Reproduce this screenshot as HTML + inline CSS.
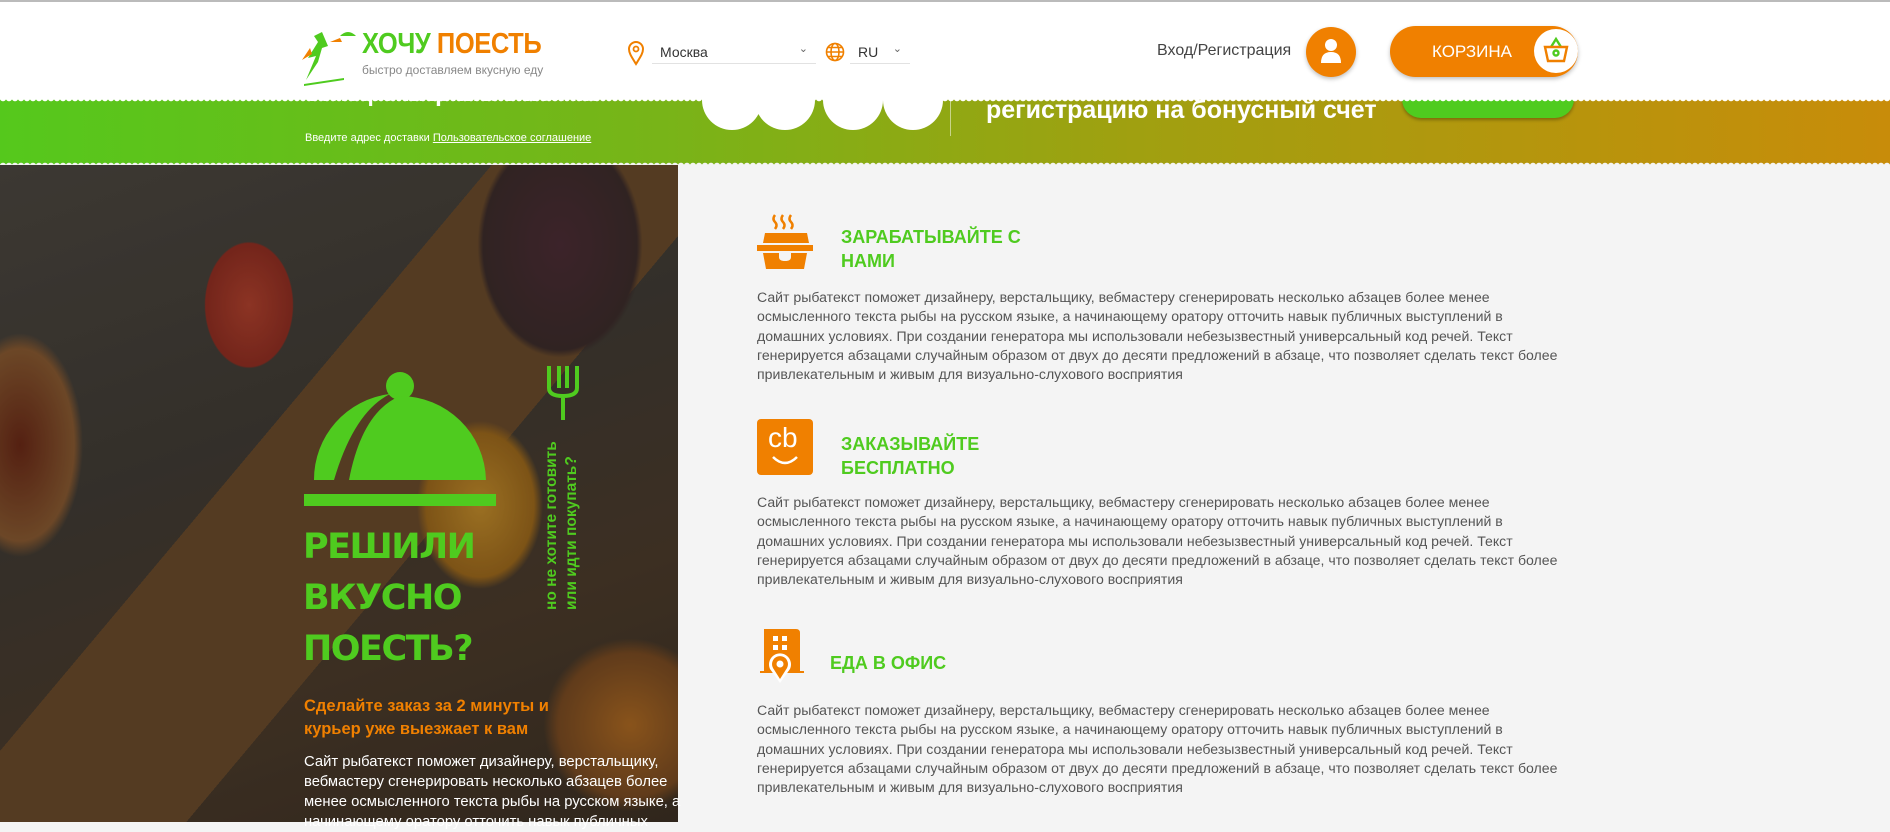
<!DOCTYPE html>
<html><head><meta charset="utf-8"><style>
*{margin:0;padding:0;box-sizing:border-box}
body{width:1890px;height:822px;overflow:hidden;background:#f4f4f4;font-family:"Liberation Sans","DejaVu Sans",sans-serif;position:relative}
.abs{position:absolute}
.band{left:0;top:88px;width:1890px;height:78px;background:linear-gradient(90deg,#55c81c 0%,#78b418 35%,#a0a010 60%,#c88c0a 100%)}
.header{left:0;top:0;width:1890px;height:98px;background:#fff;border-top:2px solid #bbb}
.wave{left:0;width:1890px;height:6px;background:radial-gradient(circle at 3px 0,#fff 3px,transparent 3.5px) 0 0/6px 6px repeat-x}
.photo{left:0;top:165px;width:678px;height:657px;background:
radial-gradient(ellipse 62px 88px at 249px 140px,#b4402c 0%,#932c20 70%,transparent 72%),
radial-gradient(ellipse 90px 120px at 480px 340px,#c8902a 0%,#a06a1a 60%,transparent 70%),
radial-gradient(ellipse 110px 150px at 560px 80px,#4a2a34 0%,#3a2a2a 70%,transparent 75%),
radial-gradient(ellipse 90px 160px at 20px 280px,#6a2614 0%,#8a5a30 60%,transparent 70%),
radial-gradient(ellipse 120px 120px at 630px 560px,#b06a20 0%,#7a4a20 60%,transparent 72%),
linear-gradient(130deg,transparent 0 40%,#6a4a2a 40% 60%,transparent 60%),
linear-gradient(160deg,#4a4640 0%,#3e3a34 40%,#4a3a2a 70%,#3a2e22 100%)}
.photo:after{content:"";position:absolute;inset:0;background:rgba(20,15,10,.25)}
.g{color:#4fcb1f}.o{color:#f08000}
.par{left:757px;width:820px;font-size:14.1px;line-height:19.3px;color:#555}
.tt{font-weight:bold;font-size:18px;line-height:24px;color:#4fcb1f}
</style></head><body>
<div class="abs band"></div>
<div class="abs wave" style="background:radial-gradient(circle at 3px 6px,#f4f4f4 3px,transparent 3.5px) 0 0/6px 6px repeat-x;height:6px;top:160px"></div>
<div class="abs" style="left:986px;top:96px;color:#fff;font-weight:bold;font-size:25px">регистрацию на бонусный счет</div>
<div class="abs" style="left:305px;top:80px;color:#fff;font-weight:bold;font-size:24px">Телефон:Пригласи:заказ</div>
<div class="abs" style="left:702px;top:70px;width:60px;height:60px;border-radius:50%;background:#fff"></div>
<div class="abs" style="left:755px;top:70px;width:60px;height:60px;border-radius:50%;background:#fff"></div>
<div class="abs" style="left:823px;top:70px;width:60px;height:60px;border-radius:50%;background:#fff"></div>
<div class="abs" style="left:883px;top:70px;width:60px;height:60px;border-radius:50%;background:#fff"></div>
<div class="abs" style="left:950px;top:100px;width:1px;height:36px;background:rgba(255,255,255,.5)"></div>
<div class="abs" style="left:1402px;top:80px;width:172px;height:38px;border-radius:19px;background:#4fcb1f;box-shadow:0 2px 3px rgba(0,0,0,.3)"></div>
<div class="abs" style="left:305px;top:132px;color:#fff;font-size:11px">Введите адрес доставки <u>Пользовательское соглашение</u></div>
<div class="abs header"></div>
<div class="abs wave" style="top:98px"></div>
<svg class="abs" style="left:300px;top:28px" width="60" height="58" viewBox="0 0 60 58"><path d="M22 4 L14 8 L18 14 L8 30 L16 28 L6 52 L18 34 L22 20 L28 18 Z" fill="#4fcb1f"/><path d="M10 20 L2 32 L12 26Z" fill="#f08000"/><path d="M4 56 L44 50 L44 52 L4 58Z" fill="#4fcb1f"/><path d="M30 14 L40 10 L42 14Z" fill="#f08000"/><path d="M40 8 Q48 0 56 8 Z" fill="#4fcb1f"/></svg>
<div class="abs" style="left:362px;top:28px;font-weight:bold;font-size:29px;letter-spacing:-0.5px;transform:scaleX(0.88);transform-origin:0 0;white-space:nowrap"><span class="g">ХОЧУ</span> <span class="o">ПОЕСТЬ</span></div>
<div class="abs" style="left:362px;top:63px;font-size:12px;color:#888">быстро доставляем вкусную еду</div>
<svg class="abs" style="left:627px;top:40px" width="18" height="26" viewBox="0 0 18 26"><path d="M9 24 C4 16 2 13 2 9 A7 7 0 0 1 16 9 C16 13 14 16 9 24Z" fill="none" stroke="#f08000" stroke-width="2"/><circle cx="9" cy="9" r="2.5" fill="none" stroke="#f08000" stroke-width="1.8"/></svg>
<div class="abs" style="left:652px;top:40px;width:164px;height:24px;border-bottom:1px solid #e2e2e2;font-size:14px;color:#333;padding:4px 8px">Москва<span style="position:absolute;right:8px;top:2px;font-size:11px;color:#666">⌄</span></div>
<svg class="abs" style="left:825px;top:42px" width="20" height="20" viewBox="0 0 20 20" fill="none" stroke="#f08000" stroke-width="1.6"><circle cx="10" cy="10" r="8.5"/><ellipse cx="10" cy="10" rx="4" ry="8.5"/><path d="M1.5 10H18.5M3 5.5H17M3 14.5H17"/></svg>
<div class="abs" style="left:850px;top:40px;width:60px;height:24px;border-bottom:1px solid #e2e2e2;font-size:14px;color:#333;padding:4px 8px">RU<span style="position:absolute;right:8px;top:2px;font-size:11px;color:#666">⌄</span></div>
<div class="abs" style="left:1157px;top:42px;font-size:16px;color:#444">Вход/Регистрация</div>
<div class="abs" style="left:1306px;top:27px;width:50px;height:50px;border-radius:50%;background:#f08000;box-shadow:0 2px 4px rgba(0,0,0,.25)"></div>
<svg class="abs" style="left:1320px;top:38px" width="22" height="26" viewBox="0 0 22 26"><circle cx="11" cy="7" r="6" fill="#fff"/><path d="M1 25 Q1 14 11 14 Q21 14 21 25Z" fill="#fff"/></svg>
<div class="abs" style="left:1390px;top:26px;width:188px;height:51px;border-radius:26px;background:#f08000;box-shadow:0 2px 4px rgba(0,0,0,.25)"></div>
<div class="abs" style="left:1432px;top:42px;font-size:17px;color:#fff">КОРЗИНА</div>
<div class="abs" style="left:1534px;top:29px;width:44px;height:44px;border-radius:50%;background:#fff"></div>
<svg class="abs" style="left:1543px;top:36px" width="26" height="28" viewBox="0 0 26 28" fill="none" stroke-width="2.4"><path d="M8 11 L13 3 L18 11" stroke="#4fcb1f"/><path d="M2 11H24L21 25H5Z" stroke="#f08000"/><circle cx="13" cy="17" r="2.5" stroke="#4fcb1f"/></svg>
<div class="abs photo"></div>
<svg class="abs" style="left:304px;top:372px" width="192" height="136" viewBox="0 0 192 136"><circle cx="96" cy="14" r="14" fill="#4fcb1f"/><path d="M10 108 A86 86 0 0 1 86 22 Q50 40 30 108Z" fill="#4fcb1f"/><path d="M45 108 Q58 40 96 24 A86 86 0 0 1 182 108Z" fill="#4fcb1f"/><rect x="0" y="122" width="192" height="12" fill="#4fcb1f"/></svg>
<svg class="abs" style="left:547px;top:366px" width="32" height="54" viewBox="0 0 32 54" fill="none" stroke="#4fcb1f" stroke-width="4"><path d="M2 0V22Q2 30 16 30Q30 30 30 22V0M12 0V22M20 0V22M16 30V54"/></svg>
<div class="abs g" style="left:542px;top:610px;transform:rotate(-90deg);transform-origin:0 0;font-weight:bold;font-size:15.5px;line-height:20px;white-space:nowrap">но не хотите готовить<br>или идти покупать?</div>
<div class="abs g" style="left:303px;top:522px;font-weight:bold;font-size:35px;line-height:51px;font-family:'DejaVu Sans',sans-serif;letter-spacing:-1.5px">РЕШИЛИ<br>ВКУСНО<br>ПОЕСТЬ?</div>
<div class="abs o" style="left:304px;top:695px;font-weight:bold;font-size:16.5px;line-height:23px">Сделайте заказ за 2 минуты и<br>курьер уже выезжает к вам</div>
<div class="abs" style="left:304px;top:752px;color:#fff;font-size:14.8px;line-height:20px;white-space:nowrap">Сайт рыбатекст поможет дизайнеру, верстальщику,<br>вебмастеру сгенерировать несколько абзацев более<br>менее осмысленного текста рыбы на русском языке, а<br>начинающему оратору отточить навык публичных</div>
<svg class="abs" style="left:757px;top:213px" width="58" height="58" viewBox="0 0 58 58" fill="#f08000"><path d="M18 2 q-3 4 0 7 q3 3 0 7M26 2 q-3 4 0 7 q3 3 0 7M34 2 q-3 4 0 7 q3 3 0 7" stroke="#f08000" stroke-width="2.5" fill="none"/><path d="M8 20H50L52 30H6Z"/><rect x="0" y="32" width="56" height="6"/><path d="M6 40H22V44Q22 48 28 48Q34 48 34 44V40H50L47 56H9Z"/></svg>
<div class="abs tt" style="left:841px;top:225px">ЗАРАБАТЫВАЙТЕ С<br>НАМИ</div>
<div class="abs par" style="top:288px">Сайт рыбатекст поможет дизайнеру, верстальщику, вебмастеру сгенерировать несколько абзацев более менее<br>осмысленного текста рыбы на русском языке, а начинающему оратору отточить навык публичных выступлений в<br>домашних условиях. При создании генератора мы использовали небезызвестный универсальный код речей. Текст<br>генерируется абзацами случайным образом от двух до десяти предложений в абзаце, что позволяет сделать текст более<br>привлекательным и живым для визуально-слухового восприятия</div>
<div class="abs" style="left:757px;top:419px;width:56px;height:56px;border-radius:4px;background:#f08000"></div>
<div class="abs" style="left:768px;top:422px;color:#fff;font-size:28px">cb</div>
<svg class="abs" style="left:770px;top:455px" width="30" height="12" viewBox="0 0 30 12"><path d="M3 2Q15 14 27 2" stroke="#fff" stroke-width="2.5" fill="none"/></svg>
<div class="abs tt" style="left:841px;top:432px">ЗАКАЗЫВАЙТЕ<br>БЕСПЛАТНО</div>
<div class="abs par" style="top:493px">Сайт рыбатекст поможет дизайнеру, верстальщику, вебмастеру сгенерировать несколько абзацев более менее<br>осмысленного текста рыбы на русском языке, а начинающему оратору отточить навык публичных выступлений в<br>домашних условиях. При создании генератора мы использовали небезызвестный универсальный код речей. Текст<br>генерируется абзацами случайным образом от двух до десяти предложений в абзаце, что позволяет сделать текст более<br>привлекательным и живым для визуально-слухового восприятия</div>
<svg class="abs" style="left:760px;top:627px" width="44" height="58" viewBox="0 0 44 58"><path d="M4 2H36Q40 2 40 6V44H44V46H0V44H4Z" fill="#f08000"/><g fill="#fff"><rect x="13" y="9" width="5" height="5"/><rect x="22" y="9" width="5" height="5"/><rect x="13" y="18" width="5" height="5"/><rect x="22" y="18" width="5" height="5"/></g><path d="M20 56L10 42A11 11 0 1 1 30 42Z" fill="#fff"/><path d="M20 52L13 41A8 8 0 1 1 27 41Z" fill="#f08000"/><circle cx="20" cy="37" r="3.5" fill="#fff"/></svg>
<div class="abs tt" style="left:830px;top:651px">ЕДА В ОФИС</div>
<div class="abs par" style="top:701px">Сайт рыбатекст поможет дизайнеру, верстальщику, вебмастеру сгенерировать несколько абзацев более менее<br>осмысленного текста рыбы на русском языке, а начинающему оратору отточить навык публичных выступлений в<br>домашних условиях. При создании генератора мы использовали небезызвестный универсальный код речей. Текст<br>генерируется абзацами случайным образом от двух до десяти предложений в абзаце, что позволяет сделать текст более<br>привлекательным и живым для визуально-слухового восприятия</div>
</body></html>
